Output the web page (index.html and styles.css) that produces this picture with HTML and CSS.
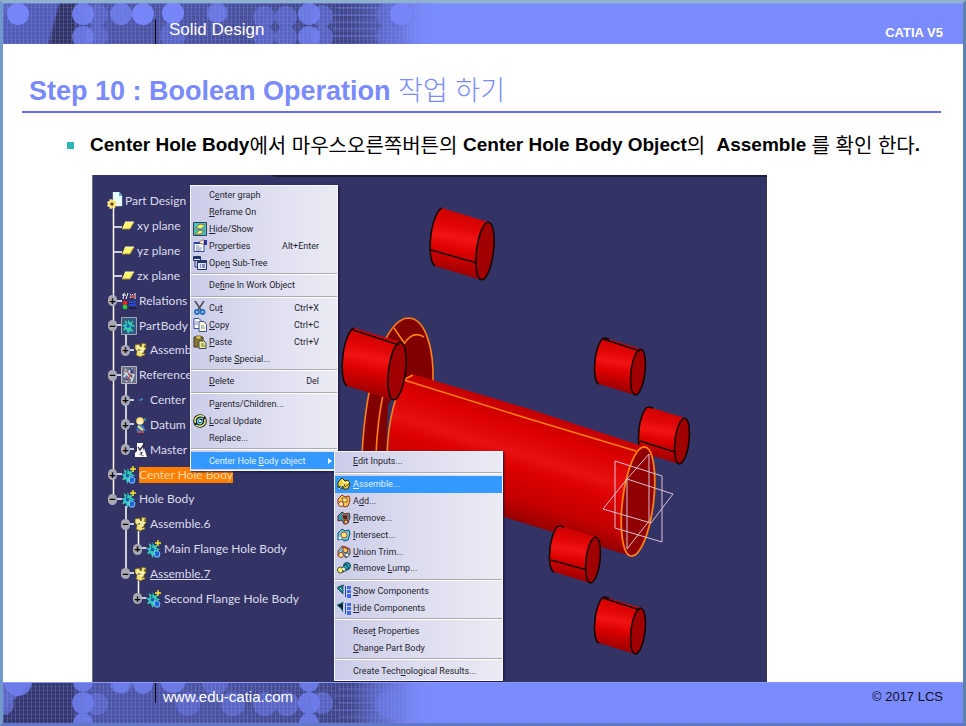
FILE: index.html
```html
<!DOCTYPE html>
<html lang="ko">
<head>
<meta charset="utf-8">
<title>Solid Design - CATIA V5</title>
<link rel="stylesheet" href="styles.css">
</head>
<body>
<svg class="defs" width="0" height="0" aria-hidden="true">
  <defs>
    <linearGradient id="band" x1="0" x2="1" y1="0" y2="0">
      <stop offset="0" stop-color="#5c66c4"/><stop offset=".1" stop-color="#4c54a8"/><stop offset=".14" stop-color="#33366c"/>
      <stop offset=".2" stop-color="#4c54a6"/><stop offset=".5" stop-color="#4a529f"/><stop offset=".8" stop-color="#3f4585"/>
      <stop offset=".92" stop-color="#5963bd"/><stop offset="1" stop-color="#7a8bfd"/>
    </linearGradient>
    <linearGradient id="fade" x1="0" x2="1" y1="0" y2="0">
      <stop offset="0" stop-color="#7a8bfd" stop-opacity="0"/><stop offset="1" stop-color="#7a8bfd"/>
    </linearGradient>
    <pattern id="weave" width="4" height="4" patternUnits="userSpaceOnUse">
      <path d="M0 .5H4" stroke="#8f9cf5" stroke-width="1" opacity=".14"/><path d="M.5 0V4" stroke="#8f9cf5" stroke-width="1" opacity=".24"/>
    </pattern>
    <linearGradient id="red" x1=".55" y1="0" x2=".4" y2="1">
      <stop offset="0" stop-color="#c80000"/><stop offset=".25" stop-color="#e00505"/><stop offset=".42" stop-color="#f01414"/>
      <stop offset=".6" stop-color="#dc0000"/><stop offset="1" stop-color="#8c0000"/>
    </linearGradient>
    <linearGradient id="tube" gradientUnits="userSpaceOnUse" x1="540" y1="410" x2="506" y2="520">
      <stop offset="0" stop-color="#c00000"/><stop offset=".2" stop-color="#dc0000"/><stop offset=".42" stop-color="#e81010"/>
      <stop offset=".55" stop-color="#dc0000"/><stop offset=".8" stop-color="#c40000"/><stop offset="1" stop-color="#900000"/>
    </linearGradient>
    <symbol id="cyl-big" viewBox="0 0 68 76" overflow="visible">
      <path d="M13 2 59 16A9 29.500 7 0 1 52 74L6 60A9 29.500 7 0 1 13 2Z" fill="url(#red)"/>
      <path d="M13 2A9 29.500 7 0 0 6 60" fill="none" stroke="#160000" stroke-width="1.600"/>
      <ellipse cx="56" cy="45" rx="8.500" ry="29" transform="rotate(7 56 45)" fill="#a00000" stroke="#160000" stroke-width="1.600"/>
    </symbol>
    <symbol id="cyl" viewBox="0 0 54 62" overflow="visible">
      <path d="M11 3 47 14A7 23 7 0 1 41 60L5 49A7 23 7 0 1 11 3Z" fill="url(#red)"/>
      <path d="M11 3A7 23 7 0 0 5 49M11 3l4 1" fill="none" stroke="#160000" stroke-width="1.600"/>
      <ellipse cx="44" cy="37" rx="7" ry="23" transform="rotate(7 44 37)" fill="#a00000" stroke="#160000" stroke-width="1.600"/>
    </symbol>
    <symbol id="i-part" viewBox="0 0 16 18">
      <path d="M6 0h6l3 4v10H6z" fill="#eaffff" stroke="#b8d8e0" stroke-width=".5"/><path d="M12 0v4h3" fill="#48b8c8"/>
      <circle cx="5" cy="12" r="4" fill="#f4d868" stroke="#fff0a0" stroke-width="2" stroke-dasharray="2 1.200"/><circle cx="5" cy="12" r="1.500" fill="#504010"/>
    </symbol>
    <symbol id="i-plane" viewBox="0 0 14 12">
      <path d="M4 2h9l-4 7H1z" fill="#fff56a"/><path d="M1 9h8l4-7" fill="none" stroke="#a09040" stroke-width="1"/><path d="M4 2h9" stroke="#fffbd0"/>
    </symbol>
    <symbol id="i-rel" viewBox="0 0 16 18">
      <path d="M4 1C2 1 3 4 2 7M1 3h4M7 1 5 7M9 2l3 4M12 2 9 6M14 1v6" fill="none" stroke="#fff" stroke-width="1"/>
      <path d="M10 3h4v3h-4z" fill="#c05050"/><circle cx="4" cy="11" r="2.300" fill="#ff2020"/><circle cx="4" cy="15" r="2.300" fill="#20d838"/>
      <path d="M8 10h7M8 13h7" stroke="#2048d8" stroke-width="2"/><path d="M8 16h7" stroke="#080820"/>
    </symbol>
    <symbol id="i-gear" viewBox="0 0 16 18">
      <path d="M7 1l2 4 4-2-2 4 4 2-4 2 2 5-4-2-2 4-2-5-4 1 2-4-3-2 4-1-1-5 4 3z" fill="#35c6c8"/>
      <path d="M4 4l3 4 5-3M3 13l4-4 2 6M5 8h5" stroke="#38e060" fill="none"/><circle cx="7" cy="9" r="2" fill="#1d5bc0"/>
      <path d="M6 5v2M11 9v3" stroke="#133a66"/>
    </symbol>
    <symbol id="i-pbody" viewBox="0 0 16 18">
      <path d="M.5.5h15v17H.5z" fill="#35597c" stroke="#a0a4ac"/><use href="#i-gear" x="1" y="1" width="14" height="16"/>
    </symbol>
    <symbol id="i-ref" viewBox="0 0 16 18">
      <path d="M.5.5h15v17H.5z" fill="#716f83" stroke="#b8b8bc"/><path d="M4 3l3 4-4 3 3 6M11 2l-4 5 6 2-3 7M3 6l9 8" stroke="#c7e0e8" stroke-width="1.500" fill="none"/>
      <path d="M5 4l6 8M11 6l-5 9" stroke="#ad4548" fill="none"/><path d="M9 2l3 5M3 12l3 2" stroke="#223b8c" stroke-width="1.500"/>
    </symbol>
    <symbol id="i-body" viewBox="0 0 16 18">
      <use href="#i-gear" x="0" y="1" width="15" height="17"/><path d="M8 11h4l2 2-1 4H9z" fill="#1e63dd" stroke="#8de3ff" stroke-width=".8"/>
      <path d="M12 0v6M9 3h6" stroke="#ffe92a" stroke-width="1.400"/>
    </symbol>
    <symbol id="i-asm" viewBox="0 0 14 16">
      <path d="M1 3l4-1 2 3 1-4 4 1v5l-2 2 1 4-5 2-4-2 1-4-2-2z" fill="#f3df77" stroke="#6c5c1d" stroke-width=".8"/>
      <path d="M3 4l2 3 4-1M4 9l4 1 2-4" stroke="#fffde0" fill="none"/><path d="M5 7v2M8 12l3-2M11 3v3" stroke="#332b13" fill="none"/>
    </symbol>
    <symbol id="i-datum" viewBox="0 0 14 16">
      <circle cx="6" cy="4" r="3.800" fill="#ffe278"/><circle cx="6" cy="5" r="2" fill="#fff4dd"/><path d="M2 14l2-6h5l3 6z" fill="#2d7bc8"/>
      <path d="M4 9l5 4" stroke="#ffe278" stroke-width="2"/><path d="M3 15h7" stroke="#ec5546" stroke-width="1.500"/><path d="M11 1v3" stroke="#4fd9d7"/>
    </symbol>
    <symbol id="i-master" viewBox="0 0 14 16">
      <path d="M3 1h6v9H3zM1 11l4-4 3 8H1zM7 15l3-9 3 9z" fill="#fff"/><path d="M4 5l2 3 5-7" stroke="#252542" stroke-width="1.300" fill="none"/><path d="M5 12l5 2" stroke="#808094"/>
    </symbol>
    <symbol id="i-center" viewBox="0 0 14 16"><path d="M5 8h3V6" fill="none" stroke="#39a7e5"/></symbol>
    <symbol id="m-hide" viewBox="0 0 14 14">
      <path d="M.5.5h13v13H.5z" fill="#45c3c6" stroke="#344054"/><path d="M2 6l5-4 5 1-4 4H2zM2 12l5-4h5l-4 4z" fill="#fff36c" stroke="#685d24" stroke-width=".7"/><path d="M3 5l8 5" stroke="#316aac"/>
    </symbol>
    <symbol id="m-prop" viewBox="0 0 14 14">
      <path d="M1 3.500h10v9H1z" fill="#fff" stroke="#334c9c"/><path d="M1 4h8" stroke="#2944aa" stroke-width="2"/><path d="M3 7h3M3 9h6M3 11h5" stroke="#7180b8"/>
      <path d="M6 3l3-2h2v4H8z" fill="#ffe7c4" stroke="#614a50" stroke-width=".6"/><path d="M11 1h3v5h-3z" fill="#27379c"/>
    </symbol>
    <symbol id="m-tree" viewBox="0 0 14 14">
      <path d="M.5.500h7v4h-7zM4.500 4.500h9v9h-9z" fill="#dfe5fb" stroke="#24366e"/><path d="M1 1h6v2H1zM5 5h8v2H5z" fill="#24366e"/><path d="M2 5v6h3M7 9h1M9 9h3M7 11h1M9 11h3" stroke="#24366e" fill="none"/>
    </symbol>
    <symbol id="m-cut" viewBox="0 0 14 14">
      <path d="M2 0l6 9M11 0 5 9" stroke="#4a4c58" stroke-width="1.600"/><circle cx="4" cy="11" r="2" fill="none" stroke="#236ec4" stroke-width="1.800"/><circle cx="9.500" cy="11" r="2" fill="none" stroke="#236ec4" stroke-width="1.800"/>
    </symbol>
    <symbol id="m-copy" viewBox="0 0 14 14">
      <path d="M1 .5h5l2 2v8H1z" fill="#fff" stroke="#3b5298"/><path d="M6 3.500h5l2.500 3v7H6z" fill="#fff8ce" stroke="#3b5298"/><path d="M2 4h3M2 6h3M8 8h3M8 10h4" stroke="#718bd0"/>
    </symbol>
    <symbol id="m-paste" viewBox="0 0 14 14">
      <path d="M1 2h9v10H1z" fill="#8a743e" stroke="#43361c"/><path d="M3 1h5v3H3z" fill="#eed35d" stroke="#54491e" stroke-width=".7"/><path d="M6 6h5l2 2v5.500H6z" fill="#eef19a" stroke="#3f4c44"/><path d="M8 9h3M8 11h4" stroke="#667038"/>
    </symbol>
    <symbol id="m-upd" viewBox="0 0 14 14">
      <circle cx="7" cy="7" r="6.800" fill="#101a30"/><path d="M2.500 9C0 3 7 0 11 3M11.500 5C14 11 7 14 3 11" fill="none" stroke="#eaf06c" stroke-width="1.500"/><path d="M5 9C3 5 8 3 10 5M9 6c1 3-2 5-4 3" fill="none" stroke="#73d9ed" stroke-width="1.400"/><circle cx="7" cy="7" r="1.200" fill="#fff"/>
    </symbol>
    <symbol id="m-asm" viewBox="0 0 14 14">
      <path d="M1 5l4-4 3 3 3-1 2 4-2 5H7l-2-3-4 1z" fill="#ecd23e" stroke="#35300c"/><path d="M2 12l4-5 3 2M5 2l2 4 5-1" fill="none" stroke="#fffac0"/><path d="M1 10l5 2 2-5M8 10l4-3" fill="none" stroke="#564710"/>
    </symbol>
    <symbol id="m-add" viewBox="0 0 14 14">
      <path d="M1 5l4-4 3 2 4-1 1 4-2 6-4 1-2-4-4 1z" fill="#f7c84e" stroke="#903022"/><circle cx="4" cy="10" r="2.500" fill="#fff0ad" stroke="#a33d2d"/><path d="M5 4h5v4H6z" fill="#ffe68e" stroke="#5c3b17" stroke-width=".7"/>
    </symbol>
    <symbol id="m-rem" viewBox="0 0 14 14">
      <path d="M1 5l4-4 3 2 4-1 1 4-2 6-4 1-2-4-4 1z" fill="#2aa4b4" stroke="#672222"/><path d="M5 4h6l-1 5-4-1z" fill="#452623" stroke="#c4543a"/><circle cx="9" cy="11" r="2" fill="#eecb68" stroke="#682b22"/>
    </symbol>
    <symbol id="m-int" viewBox="0 0 14 14">
      <path d="M1 5l4-4 3 2 4-1 1 4-2 6-4 1-2-2-4 1z" fill="#62cad8" stroke="#154d73"/><circle cx="7" cy="7" r="3" fill="#fae673" stroke="#d05132"/><circle cx="3" cy="10" r="1.500" fill="#d5f8ff"/>
    </symbol>
    <symbol id="m-uni" viewBox="0 0 14 14">
      <path d="M1 6l4-5 4 1 4 2v5l-4 4-3-3-5 1z" fill="#68bed2" stroke="#a2301f"/><path d="M6 2l5 2-1 4-4-1z" fill="#f5ca55" stroke="#8f3020"/><circle cx="4" cy="10" r="2.500" fill="#ffe687" stroke="#9d3626"/><circle cx="10" cy="10" r="2" fill="#ebfbff" stroke="#376b84"/>
    </symbol>
    <symbol id="m-lump" viewBox="0 0 14 14">
      <circle cx="3.500" cy="9" r="3" fill="#ffef72" stroke="#4c4820"/><circle cx="10" cy="5" r="3.500" fill="#24a5b4" stroke="#143c51"/><path d="M5 7l4-4 3 5-6 3z" fill="none" stroke="#143c51"/><circle cx="6.500" cy="8" r="1.500" fill="#fff7ba"/>
    </symbol>
    <symbol id="m-show" viewBox="0 0 14 14">
      <path d="M0 4l6-3v9zM1 3l6-2" fill="#168095" stroke="#123f4a" stroke-width=".7"/><path d="M3 4l2 2" stroke="#8df2f5"/><path d="M8.500 2v11" stroke="#2448c4"/><path d="M10 2h4v3h-4zM10 6h4v3h-4zM10 10h4v4h-4z" fill="#3d6bea"/>
    </symbol>
    <symbol id="m-hidec" viewBox="0 0 14 14">
      <path d="M0 4l6-3v9z" fill="#08242c"/><path d="M0 4l7-3M3 6l3 5" fill="none" stroke="#169aa8"/><path d="M8.500 2v11" stroke="#2448c4"/><path d="M10 2h4v3h-4zM10 6h4v3h-4zM10 10h4v4h-4z" fill="#3d6bea"/>
    </symbol>
  </defs>
</svg>

<div class="slide">
  <header class="bar">
    <svg class="deco" width="430" height="41" viewBox="0 0 430 41" aria-hidden="true">
      <rect width="430" height="41" fill="url(#band)"/>
      <path d="M14 0H56L44 41H0V14z" fill="#525cb6"/><path d="M57 0h14v41H47z" fill="#313463"/>
      <path d="M335 5h60M330 12h60M325 19h60M330 26h60M325 33h65" stroke="#6470cf" stroke-width="1"/>
      <g fill="#5e69ca" opacity=".85"><circle cx="94" cy="12" r="11"/><circle cx="94" cy="33" r="11"/><circle cx="213" cy="10" r="10"/><circle cx="261" cy="14" r="11"/><circle cx="283" cy="14" r="11"/><circle cx="261" cy="34" r="11"/><circle cx="283" cy="34" r="11"/><circle cx="319" cy="13" r="11"/><circle cx="319" cy="34" r="11"/><circle cx="385" cy="12" r="12"/><circle cx="385" cy="34" r="12"/><circle cx="170" cy="32" r="13"/></g>
      <rect width="430" height="41" fill="url(#weave)"/>
      <rect x="375" width="55" height="41" fill="url(#fade)"/>
      <g fill="#7686f8"><circle cx="15" cy="11" r="11"/><circle cx="140" cy="11" r="11"/><circle cx="170" cy="10" r="11"/><circle cx="398" cy="11" r="11"/><circle cx="80" cy="11" r="11" opacity=".85"/><circle cx="80" cy="34" r="11" opacity=".7"/><circle cx="118" cy="11" r="11" opacity=".75"/><circle cx="215" cy="10" r="10" opacity=".55"/><circle cx="306" cy="11" r="11" opacity=".8"/><circle cx="306" cy="34" r="11" opacity=".75"/></g>
      <path d="M0 .5H430" stroke="#8d9bff" opacity=".4"/>
      <path d="M152.500 16V41" stroke="#050510"/>
    </svg>
    <span class="bar-title">Solid Design</span>
    <strong class="product">CATIA V5</strong>
  </header>

  <main>
    <h1>Step 10 : Boolean Operation <span class="ko">작업 하기</span></h1>
    <ul class="points">
      <li>Center Hole Body<span class="ko">에서 마우스오른쪽버튼의 </span>Center Hole Body Object<span class="ko">의&nbsp; </span>Assemble <span class="ko">를 확인 한다</span>.</li>
    </ul>

    <div class="viewer">
      <svg class="scene" width="675" height="507" viewBox="92 175 675 507" aria-hidden="true">
        <path d="M270 175H767V177H275z" fill="#1d1d3c"/><path d="M92.500 175V682" stroke="#707088"/>
        <g stroke="#fff" fill="none" stroke-width="1.500">
          <path d="M113.500 208V497M114 227h8M114 252h8M114 276h8M114 301h8M114 325h8M114 375h8M114 474h8M114 499h8"/>
          <path d="M126 334V350h8M126 382V449h8M126 400h8M126 424h8M126 506V573h8M126 524h8M138.500 531V548h8M138.500 580V598h8"/>
        </g>
        <path d="M362 455C366 376 386 318 409 318C426 319 434 350 433 386L405 379L388 405L386 455Z" fill="#800000"/>
        <g fill="none" stroke="#ff7f10" stroke-width="1.600">
          <path d="M362 455C366 376 386 318 409 318C426 319 434 350 433 382M376 455C377 430 380 408 384 390M404 344C409 336 416 332 424 337M394 328l11 16"/>
        </g>
        <use href="#cyl" x="638" y="404" width="54" height="62"/>
        <path d="M640 441l35 11" stroke="#160000" stroke-width="1.500"/>
        <path d="M387 481C388 426 394 384 412 374L526 408L645 447L631 556L387 481Z" fill="url(#tube)"/>
        <path d="M387 456C388 420 396 391 405 379L413 375M404 380L526 418L636 451" fill="none" stroke="#ff7f10" stroke-width="1.600"/>
        <ellipse cx="638" cy="501.500" rx="15.500" ry="55" transform="rotate(7 638 501.500)" fill="#900000" stroke="#ff7f10" stroke-width="1.800"/>
        <path d="M615 461l47 15v66l-47-14zM649 454v67l-22 28v-70zM603 509l24-30 46 15-22 29z" fill="none" stroke="#d9bfd2" stroke-width="1"/>
        <use href="#cyl-big" x="429" y="206" width="68" height="76"/>
        <path d="M431 250l46 13" stroke="#160000" stroke-width="1.500"/>
        <use href="#cyl-big" x="341" y="326" width="68" height="76"/>
        <path d="M353 330l46 15" stroke="#160000" stroke-width="1.500"/>
        <use href="#cyl" x="594" y="335" width="54" height="62"/>
        <path d="M603 339l37 12" stroke="#160000" stroke-width="1.500"/>
        <use href="#cyl" x="549" y="523" width="54" height="62"/>
        <path d="M551 560l36 10" stroke="#160000" stroke-width="1.500"/>
        <use href="#cyl" x="594" y="594" width="54" height="62"/>
        <path d="M603 598l37 12" stroke="#160000" stroke-width="1.500"/>
      </svg>

      <ul class="tree">
        <li class="root"><svg width="16" height="18"><use href="#i-part"/></svg><span>Part Design</span></li>
        <li class="leaf"><svg width="14" height="12"><use href="#i-plane"/></svg><span>xy plane</span></li>
        <li class="leaf"><svg width="14" height="12"><use href="#i-plane"/></svg><span>yz plane</span></li>
        <li class="leaf"><svg width="14" height="12"><use href="#i-plane"/></svg><span>zx plane</span></li>
        <li class="l1"><button class="tog" aria-label="Expand">+</button><svg width="16" height="18"><use href="#i-rel"/></svg><span>Relations</span></li>
        <li class="l1"><button class="tog minus" aria-label="Collapse">−</button><svg width="16" height="18"><use href="#i-pbody"/></svg><span>PartBody</span></li>
        <li class="l2"><button class="tog" aria-label="Expand">+</button><svg width="14" height="16"><use href="#i-asm"/></svg><span>Assemble</span></li>
        <li class="l1"><button class="tog minus" aria-label="Collapse">−</button><svg width="16" height="18"><use href="#i-ref"/></svg><span>Reference</span></li>
        <li class="l2"><button class="tog" aria-label="Expand">+</button><svg width="14" height="16"><use href="#i-center"/></svg><span>Center</span></li>
        <li class="l2"><button class="tog" aria-label="Expand">+</button><svg width="14" height="16"><use href="#i-datum"/></svg><span>Datum</span></li>
        <li class="l2"><button class="tog" aria-label="Expand">+</button><svg width="14" height="16"><use href="#i-master"/></svg><span>Master</span></li>
        <li class="l1"><button class="tog" aria-label="Expand">+</button><svg width="16" height="18"><use href="#i-body"/></svg><span class="picked">Center Hole Body</span></li>
        <li class="l1"><button class="tog minus" aria-label="Collapse">−</button><svg width="16" height="18"><use href="#i-body"/></svg><span>Hole Body</span></li>
        <li class="l2"><button class="tog minus" aria-label="Collapse">−</button><svg width="14" height="16"><use href="#i-asm"/></svg><span>Assemble.6</span></li>
        <li class="l3"><button class="tog" aria-label="Expand">+</button><svg width="16" height="18"><use href="#i-body"/></svg><span>Main Flange Hole Body</span></li>
        <li class="l2"><button class="tog minus" aria-label="Collapse">−</button><svg width="14" height="16"><use href="#i-asm"/></svg><span class="current">Assemble.7</span></li>
        <li class="l3"><button class="tog" aria-label="Expand">+</button><svg width="16" height="18"><use href="#i-body"/></svg><span>Second Flange Hole Body</span></li>
      </ul>

      <div class="menu context">
        <button><i></i><span>C<u>e</u>nter graph</span></button>
        <button><i></i><span><u>R</u>eframe On</span></button>
        <button><i><svg><use href="#m-hide"/></svg></i><span><u>H</u>ide/Show</span></button>
        <button><i><svg><use href="#m-prop"/></svg></i><span>Pr<u>o</u>perties</span><kbd>Alt+Enter</kbd></button>
        <button><i><svg><use href="#m-tree"/></svg></i><span>Ope<u>n</u> Sub-Tree</span></button>
        <hr>
        <button><i></i><span>De<u>f</u>ine In Work Object</span></button>
        <hr>
        <button><i><svg><use href="#m-cut"/></svg></i><span>Cu<u>t</u></span><kbd>Ctrl+X</kbd></button>
        <button><i><svg><use href="#m-copy"/></svg></i><span><u>C</u>opy</span><kbd>Ctrl+C</kbd></button>
        <button><i><svg><use href="#m-paste"/></svg></i><span><u>P</u>aste</span><kbd>Ctrl+V</kbd></button>
        <button><i></i><span>Paste <u>S</u>pecial...</span></button>
        <hr>
        <button><i></i><span><u>D</u>elete</span><kbd>Del</kbd></button>
        <hr>
        <button><i></i><span>P<u>a</u>rents/Children...</span></button>
        <button><i><svg><use href="#m-upd"/></svg></i><span><u>L</u>ocal Update</span></button>
        <button><i></i><span>Replace...</span></button>
        <hr>
        <button class="on"><i></i><span>Center Hole <u>B</u>ody object</span><svg class="arrow" viewBox="0 0 4 6"><path d="M0 0l4 3-4 3z" fill="#fff"/></svg></button>
      </div>

      <div class="menu sub">
        <button><i></i><span><u>E</u>dit Inputs...</span></button>
        <hr>
        <button class="on"><i><svg><use href="#m-asm"/></svg></i><span><u>A</u>ssemble...</span></button>
        <button><i><svg><use href="#m-add"/></svg></i><span>A<u>d</u>d...</span></button>
        <button><i><svg><use href="#m-rem"/></svg></i><span><u>R</u>emove...</span></button>
        <button><i><svg><use href="#m-int"/></svg></i><span><u>I</u>ntersect...</span></button>
        <button><i><svg><use href="#m-uni"/></svg></i><span><u>U</u>nion Trim...</span></button>
        <button><i><svg><use href="#m-lump"/></svg></i><span>Remove <u>L</u>ump...</span></button>
        <hr>
        <button><i><svg><use href="#m-show"/></svg></i><span><u>S</u>how Components</span></button>
        <button><i><svg><use href="#m-hidec"/></svg></i><span><u>H</u>ide Components</span></button>
        <hr>
        <button><i></i><span>Rese<u>t</u> Properties</span></button>
        <button><i></i><span><u>C</u>hange Part Body</span></button>
        <hr>
        <button><i></i><span>Create Tech<u>n</u>ological Results...</span></button>
      </div>
    </div>
  </main>

  <footer class="bar">
    <svg class="deco" width="430" height="41" viewBox="0 0 430 41" aria-hidden="true">
      <rect width="430" height="41" fill="url(#band)"/>
      <path d="M30 0h40v41H0V28z" fill="#34376d"/>
      <path d="M335 7h75M330 14h65M335 21h60M330 28h70M335 35h65" stroke="#5c67c2" stroke-width="1"/>
      <g fill="#5f6acb" opacity=".85"><circle cx="0" cy="22" r="11"/><circle cx="94" cy="22" r="11"/><circle cx="118" cy="0" r="12"/><circle cx="185" cy="22" r="12"/><circle cx="230" cy="22" r="12"/><circle cx="262" cy="22" r="12"/><circle cx="284" cy="22" r="12"/><circle cx="319" cy="21" r="11"/><circle cx="212" cy="0" r="13"/><circle cx="385" cy="22" r="13"/></g>
      <rect width="430" height="41" fill="url(#weave)"/>
      <rect x="350" width="80" height="41" fill="url(#fade)"/>
      <g fill="#7080ef" opacity=".85"><circle cx="15" cy="0" r="14"/><circle cx="80" cy="0" r="10"/><circle cx="80" cy="21" r="11"/><circle cx="80" cy="41" r="10"/><circle cx="118" cy="2" r="9"/><circle cx="140" cy="2" r="10"/><circle cx="170" cy="-2" r="13"/><circle cx="306" cy="0" r="10"/><circle cx="306" cy="21" r="11"/><circle cx="306" cy="41" r="10"/></g>
      <path d="M0 .5H430" stroke="#8d9bff"/>
      <path d="M152.500 1V21" stroke="#050510"/>
    </svg>
    <a class="site" href="#">www.edu-catia.com</a>
    <small class="copy">© 2017 LCS</small>
  </footer>
</div>
</body>
</html>
```
FILE: styles.css
```css
* { box-sizing: border-box; }
body { margin: 0; background: #fff; font-family: "Liberation Sans", "Noto Sans CJK KR", sans-serif; }
.defs { position: absolute; }
.slide {
  min-height: 100vh; display: flex; flex-direction: column;
  border: 3px solid; border-color: #8fb2cc #5d82ae #5f78c8 #7199cc;
}
.bar {
  position: relative; flex: none; height: 41px; display: flex; justify-content: space-between;
  background: #7a8bfd; border-top: 1px solid #8b9afc;
}
.deco { position: absolute; left: 0; top: -1px; }
.bar-title, .site, .product, .copy { position: relative; }
.bar-title { margin-left: 166px; font-size: 17px; line-height: 20px; padding-top: 16px; color: #fff; }
.product { margin-right: 20px; font-size: 13px; line-height: 16px; padding-top: 21px; color: #fff; }
.site { margin-left: 160px; font-size: 15px; line-height: 18px; padding-top: 5px; color: #fff; text-decoration: none; }
.copy { margin-right: 20px; font-size: 13px; line-height: 16px; padding-top: 6px; color: #10102c; }

main { flex: 1; }
h1 {
  margin: 0 22px 0 19px; padding: 26px 0 1px 7px; font-size: 27px; line-height: 38px;
  color: #7a8bfd; border-bottom: 2px solid #6b6bef; white-space: nowrap;
}
.ko { font-family: "Noto Sans CJK KR", sans-serif; font-weight: 300; }
.points { list-style: none; margin: 0; padding: 19px 20px 17px 64px; font-size: 19px; line-height: 26px; font-weight: bold; }
.points li { display: flex; align-items: center; white-space: pre; }
.points li::before { content: ""; width: 7px; height: 7px; margin-right: 16px; background: #2fb5b5; }
.points .ko { font-size: 20px; font-weight: 400; }

.viewer { position: relative; width: 675px; height: 507px; margin-left: 89px; background: #333366; overflow: hidden; }
.scene { position: absolute; left: 0; top: 0; }
.tree {
  position: relative; list-style: none; margin: 0; padding: 14px 0 0; height: 436px;
  display: flex; flex-direction: column;
  font-family: Lato, sans-serif; font-size: 12px; line-height: 16px; color: #dcdcec;
}
.tree li { flex: 1; display: flex; align-items: center; white-space: nowrap; }
.tree svg { flex: none; margin-right: 2px; }
.root { padding-left: 15px; }
.leaf { padding-left: 29px; }
.l1 { padding-left: 16px; }
.l2 { padding-left: 29px; }
.l3 { padding-left: 41px; }
.tog {
  flex: none; width: 9px; height: 11px; margin-right: 4px; padding: 0; border: 0; border-radius: 5px;
  background: #a9a9b4; color: #000; font: bold 11px/10px "Liberation Sans", sans-serif;
}
.picked { background: #ff8000; color: #ffd9a8; }
.current { text-decoration: underline; }

.menu {
  position: absolute; display: flex; flex-direction: column; padding: 1px 0;
  border: 1px solid #f6f6fc; background: linear-gradient(90deg, #cbcce8, #dcdcef 45%, #ebebf5);
  box-shadow: 1px 1px 2px #15153a;
}
.context { left: 98px; top: 10px; width: 148px; height: 286px; }
.sub { left: 242px; top: 276px; width: 169px; height: 230px; }
.menu button {
  flex: 1; min-height: 0; display: flex; align-items: center; padding: 0 18px 0 2px; border: 0; background: none;
  font-family: Roboto, sans-serif; font-size: 9px; line-height: 12px; color: #26262e; text-align: left; white-space: nowrap;
}
.menu i { flex: none; width: 16px; height: 14px; }
.menu i svg { display: block; width: 14px; height: 14px; }
.menu span { flex: 1; }
.menu kbd { font: inherit; }
.menu hr { flex: none; width: 100%; height: 2px; margin: 2px 0; border: 0; border-top: 1px solid #a9a9b8; border-bottom: 1px solid #fff; }
.menu .on { background: #3399ff; color: #e4f1ff; }
.context .on { padding-right: 5px; }
.arrow { width: 4px; height: 6px; }
```
